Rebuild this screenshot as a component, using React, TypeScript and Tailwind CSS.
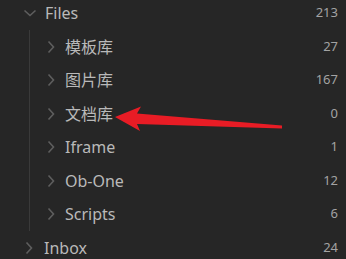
import React from "react";

const ChevronRight = () => (
  <svg width="8" height="14" viewBox="0 0 8 14" className="shrink-0">
    <path d="M1.5 1.5 L6.5 7 L1.5 12.5" fill="none" stroke="#5e5e5e" strokeWidth="1.6" />
  </svg>
);

const ChevronDown = () => (
  <svg width="14" height="8" viewBox="0 0 14 8" className="shrink-0">
    <path d="M1.5 1.5 L7 6.5 L12.5 1.5" fill="none" stroke="#5e5e5e" strokeWidth="1.6" />
  </svg>
);

const children: [string, string][] = [
  ["模板库", "27"],
  ["图片库", "167"],
  ["文档库", "0"],
  ["Iframe", "1"],
  ["Ob-One", "12"],
  ["Scripts", "6"],
];

const font = { fontFamily: '"Noto Sans", "Noto Sans CJK SC", sans-serif' };

export default function App() {
  return (
    <div className="relative w-[346px] h-[259px] overflow-hidden bg-[#262626]" style={font}>
      <div className="mt-[-3.75px]">
        <div className="flex items-center h-[33.5px] pl-[23px] pr-[8px]">
          <div className="w-[22px] flex items-center">
            <ChevronDown />
          </div>
          <span className="flex-1 text-[16px] text-[#b9b9b9]">Files</span>
          <span className="text-[13px] text-[#a3a3a3]">213</span>
        </div>
        <div className="ml-[29px] border-l border-[#3a3a3a]">
          {children.map(([name, n]) => (
            <div key={name} className="flex items-center h-[33.5px] pl-[17px] pr-[8px]">
              <div className="w-[18px] flex items-center">
                <ChevronRight />
              </div>
              <span className="flex-1 text-[16px] text-[#b9b9b9]">{name}</span>
              <span className="text-[13px] text-[#a3a3a3]">{n}</span>
            </div>
          ))}
        </div>
        <div className="flex items-center h-[33.5px] pl-[25px] pr-[8px]">
          <div className="w-[19px] flex items-center">
            <ChevronRight />
          </div>
          <span className="flex-1 text-[16px] text-[#b9b9b9]">Inbox</span>
          <span className="text-[13px] text-[#a3a3a3]">24</span>
        </div>
      </div>
      <svg className="absolute left-0 top-0 pointer-events-none" width="346" height="259" viewBox="0 0 346 259">
        <polygon
          points="115,117 141,106.5 137,113.5 282,125.5 282,128.5 137,124 140,131"
          fill="#e81c25"
        />
      </svg>
    </div>
  );
}
